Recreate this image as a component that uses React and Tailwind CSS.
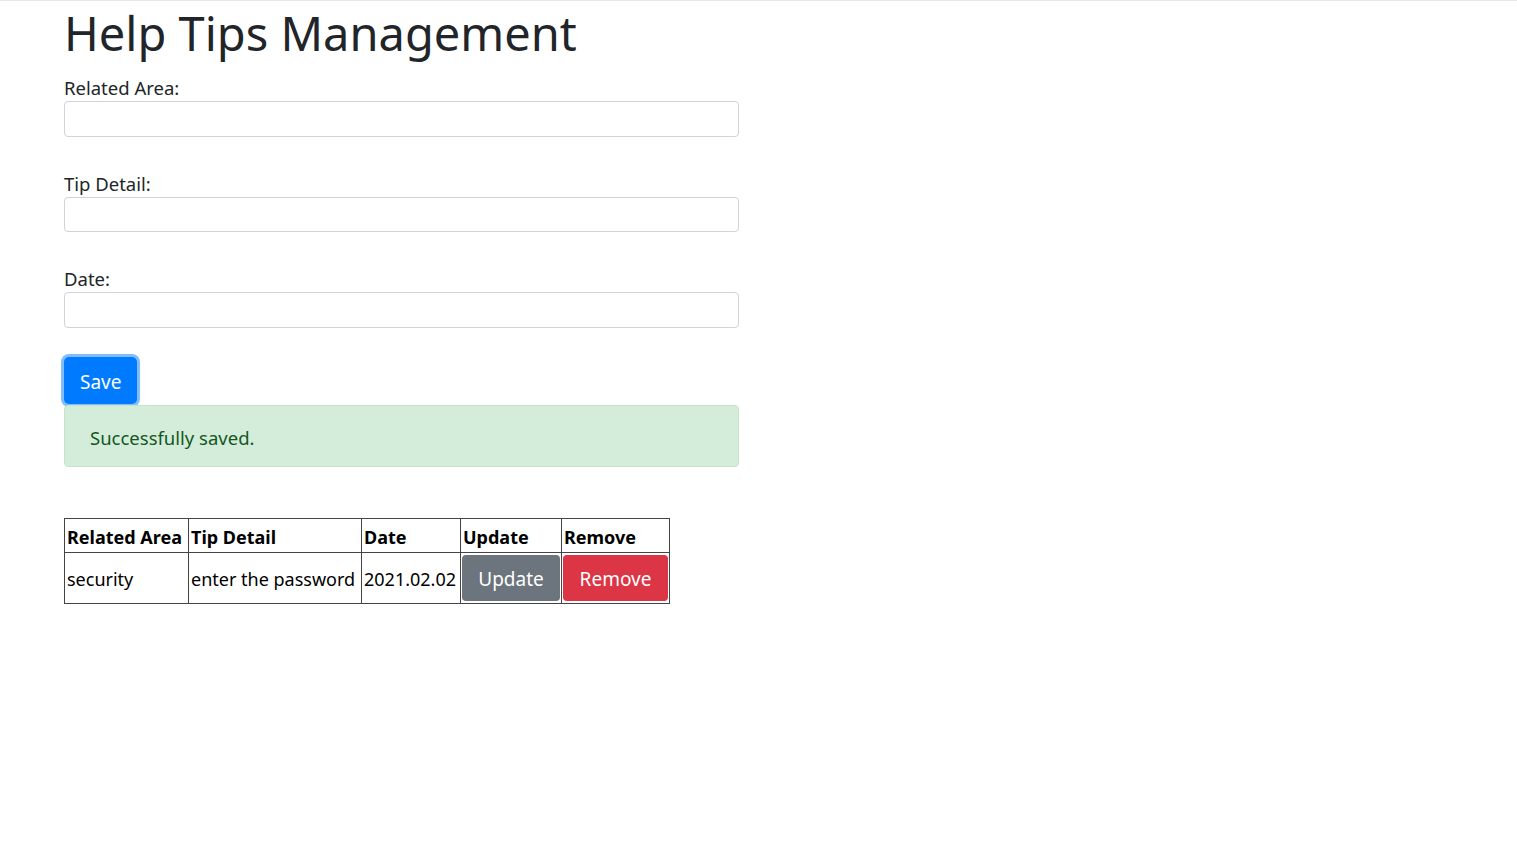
export default function App() {
  return (
    <div className="min-h-screen bg-white border-t border-[#e5e7eb] text-[#212529]" style={{ fontFamily: '"Noto Sans", "Open Sans", sans-serif' }}>
      <div className="w-[675px] ml-[64px]">
        <h1 className="text-[47px] font-normal leading-[56px] mt-[4px] mb-[13px]">Help Tips Management</h1>
        <form>
          <div className="mb-[33px]">
            <label className="block text-[18.5px] leading-[27px]">Related Area:</label>
            <input className="block w-full h-[36px] border border-[#ced4da] rounded-[4px]" />
          </div>
          <div className="mb-[33px]">
            <label className="block text-[18.5px] leading-[27px]">Tip Detail:</label>
            <input className="block w-full h-[35px] border border-[#ced4da] rounded-[4px]" />
          </div>
          <div className="mb-[29px]">
            <label className="block text-[18.5px] leading-[27px]">Date:</label>
            <input className="block w-full h-[36px] border border-[#ced4da] rounded-[4px]" />
          </div>
          <button type="button" className="block h-[47px] px-[16px] pt-[4px] text-[19px] text-white bg-[#007bff] rounded-[5px] ring-[3px] ring-[#80bdff]">Save</button>
        </form>
        <div className="mt-[1px] h-[62px] flex items-center px-[25px] pt-[3px] bg-[#d4edda] border border-[#c3e6cb] rounded-[4px] text-[#155724] text-[18.5px]">Successfully saved.</div>
        <table className="mt-[51px] w-[605px] table-fixed border-collapse text-[18px] text-black whitespace-nowrap">
          <thead>
            <tr className="h-[34px]">
              <th className="border border-[#444] text-left font-bold px-[2px] pt-[3px] w-[124px]">Related Area</th>
              <th className="border border-[#444] text-left font-bold px-[2px] pt-[3px] w-[173px]">Tip Detail</th>
              <th className="border border-[#444] text-left font-bold px-[2px] pt-[3px] w-[99px]">Date</th>
              <th className="border border-[#444] text-left font-bold px-[2px] pt-[3px] w-[101px]">Update</th>
              <th className="border border-[#444] text-left font-bold px-[2px] pt-[3px] w-[108px]">Remove</th>
            </tr>
          </thead>
          <tbody>
            <tr className="h-[51px]">
              <td className="border border-[#444] px-[2px] pt-[2px]">security</td>
              <td className="border border-[#444] px-[2px] pt-[2px]">enter the password</td>
              <td className="border border-[#444] px-[2px] pt-[2px]">2021.02.02</td>
              <td className="border border-[#444] p-[1px]">
                <button type="button" className="block w-full h-[46px] pt-[2px] text-[19px] bg-[#6c757d] text-white rounded-[4px]">Update</button>
              </td>
              <td className="border border-[#444] p-[1px]">
                <button type="button" className="block w-full h-[46px] pt-[2px] text-[19px] bg-[#dc3545] text-white rounded-[4px]">Remove</button>
              </td>
            </tr>
          </tbody>
        </table>
      </div>
    </div>
  );
}
